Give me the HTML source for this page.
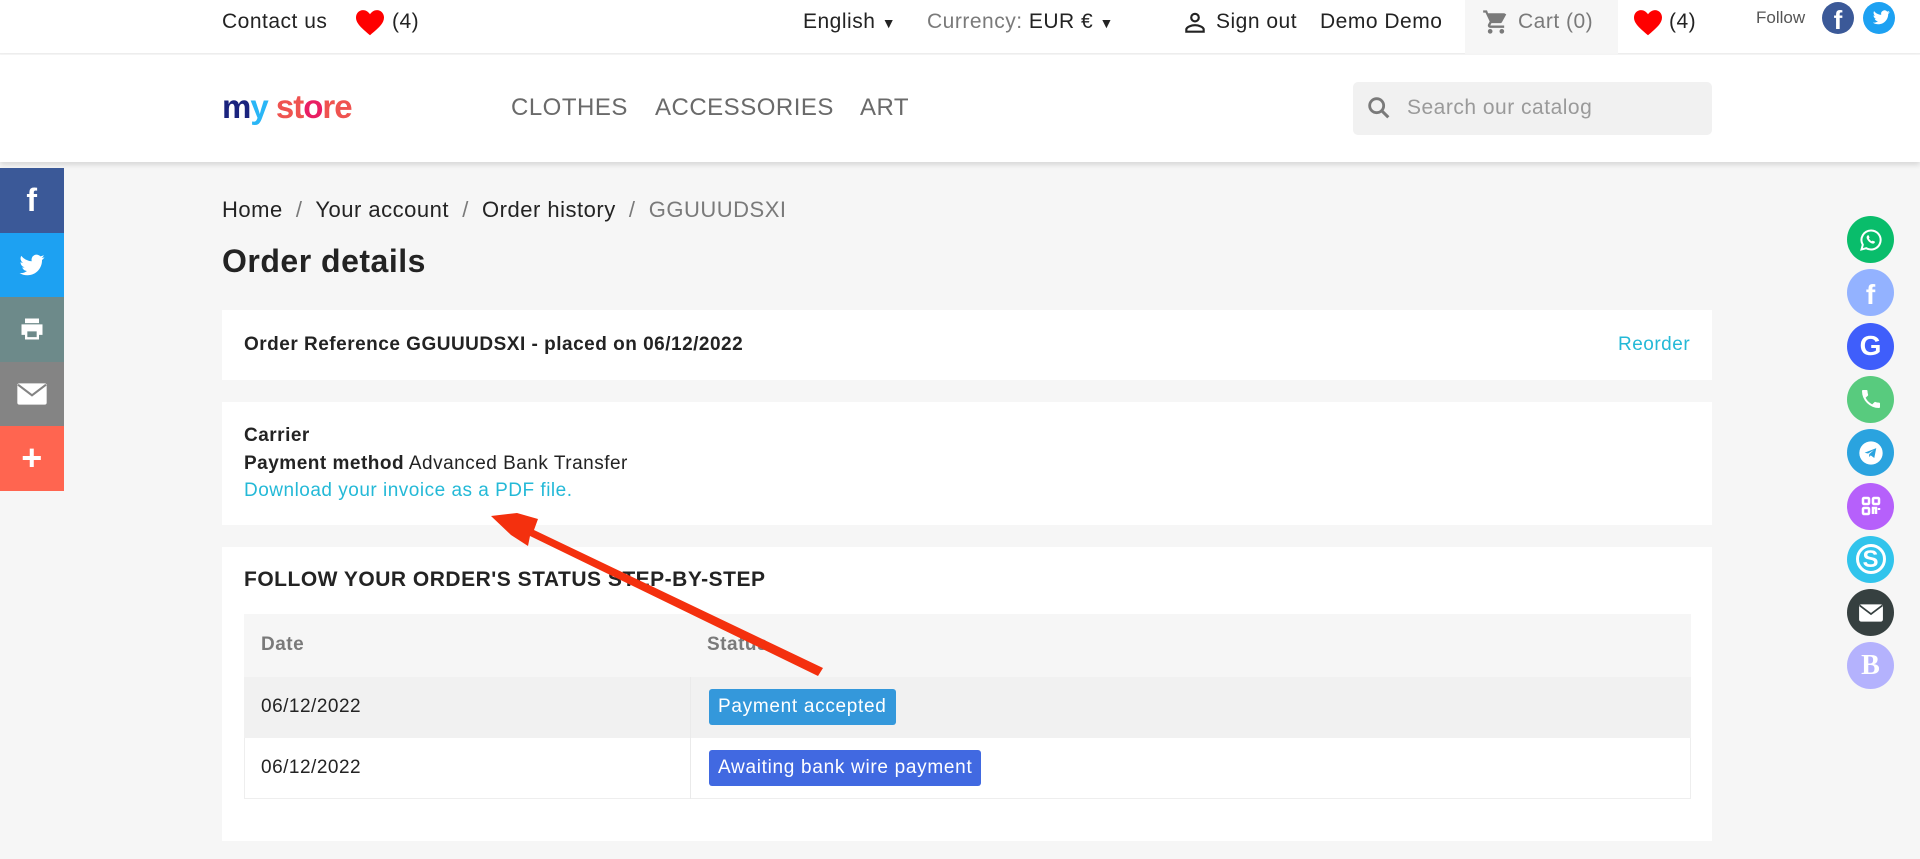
<!DOCTYPE html>
<html><head><meta charset="utf-8"><style>
*{box-sizing:border-box;margin:0;padding:0}
body{width:1920px;height:859px;overflow:hidden;background:#f6f6f6;font-family:"Liberation Sans",sans-serif;color:#232323;position:relative;letter-spacing:0.5px}
.a{position:absolute;white-space:nowrap}
.top{position:absolute;left:0;top:0;width:1920px;height:54px;background:#fff;border-bottom:1px solid #eee}
.hdr{position:absolute;left:0;top:55px;width:1920px;height:107px;background:#fff;box-shadow:0 3px 5px rgba(0,0,0,.12)}
.t{font-size:21px;top:10px}
.nav{font-size:24px;color:#6a6a6a;top:94px}
.box{position:absolute;left:222px;width:1490px;background:#fff}
.ls{position:absolute;left:0;width:64px;height:64.5px;display:flex;align-items:center;justify-content:center}
.rc{position:absolute;left:1847px;width:47px;height:47px;border-radius:50%;display:flex;align-items:center;justify-content:center;letter-spacing:0}
.badge{position:absolute;color:#fff;font-size:19px;border-radius:3px;padding:0 9px;line-height:36px;height:36px;letter-spacing:0.7px}
</style></head><body>
<div class="top"></div>
<div class="a t" style="left:222px">Contact us</div>
<svg class="a" style="left:356px;top:10px" width="28" height="26" viewBox="0 0 24 22"><path d="M12 21.5C5 15.5 0 11.5 0 6.3 0 2.8 2.6 0 6 0c2.4 0 4.6 1.5 6 3.5C13.4 1.5 15.6 0 18 0c3.4 0 6 2.8 6 6.3 0 5.2-5 9.2-12 15.2z" fill="#f00"/></svg>
<div class="a t" style="left:392px">(4)</div>
<div class="a t" style="left:803px">English <span style="font-size:14px">▼</span></div>
<div class="a t" style="left:927px;color:#7a7a7a">Currency: <span style="color:#232323">EUR € <span style="font-size:14px">▼</span></span></div>
<svg class="a" style="left:1182px;top:10px" width="26" height="26" viewBox="0 0 24 24"><circle cx="12" cy="7" r="3.5" fill="none" stroke="#232323" stroke-width="2"/><path d="M4 20v-2c0-2.5 5-4 8-4s8 1.5 8 4v2z" fill="none" stroke="#232323" stroke-width="2"/></svg>
<div class="a t" style="left:1216px">Sign out</div>
<div class="a t" style="left:1320px">Demo Demo</div>
<div class="a" style="left:1465px;top:0;width:153px;height:54px;background:#f6f6f6"></div>
<svg class="a" style="left:1482px;top:8px" width="28" height="28" viewBox="0 0 24 24"><path d="M7 18a2 2 0 100 4 2 2 0 000-4zM1 2v2h2l3.6 7.6-1.4 2.4c-.1.3-.2.6-.2 1 0 1.1.9 2 2 2h12v-2H7.4c-.1 0-.2-.1-.2-.2v-.1l.9-1.7h7.4c.8 0 1.4-.4 1.700-1l3.6-6.5-1.7-1H5.2L4.3 2zM17 18a2 2 0 100 4 2 2 0 000-4z" fill="#7a7a7a"/></svg>
<div class="a t" style="left:1518px;color:#7a7a7a">Cart (0)</div>
<svg class="a" style="left:1634px;top:10px" width="28" height="26" viewBox="0 0 24 22"><path d="M12 21.5C5 15.5 0 11.5 0 6.3 0 2.8 2.6 0 6 0c2.4 0 4.6 1.5 6 3.5C13.4 1.5 15.6 0 18 0c3.4 0 6 2.8 6 6.3 0 5.2-5 9.2-12 15.2z" fill="#f00"/></svg>
<div class="a t" style="left:1669px">(4)</div>
<div class="a" style="left:1756px;top:8px;font-size:17px;color:#555;letter-spacing:0">Follow</div>
<div class="a" style="left:1822px;top:2px;width:32px;height:32px;border-radius:50%;background:#3b5998;color:#fff;font-weight:bold;font-size:26px;text-align:center;line-height:36px;letter-spacing:0">f</div>
<div class="a" style="left:1863px;top:2px;width:32px;height:32px;border-radius:50%;background:#1da1f2"><svg width="32" height="32" viewBox="0 0 24 24"><path d="M18.5 8.2c.6-.4 1-.9 1.3-1.5-.5.3-1.1.4-1.6.5a2.6 2.6 0 00-4.5 2.4c-2.2-.1-4.1-1.2-5.4-2.8-.7 1.2-.3 2.7.8 3.5-.4 0-.8-.1-1.200-.3 0 1.3.9 2.4 2.1 2.6-.4.1-.8.1-1.2 0 .3 1 1.3 1.8 2.4 1.8-1 .8-2.4 1.2-3.8 1.1 1.2.8 2.6 1.2 4 1.2 4.9 0 7.6-4.1 7.5-7.8.5-.3.9-.8 1.3-1.3-.5.2-1 .3-1.5.4z" fill="#fff"/></svg></div>

<div class="hdr"></div>
<div class="a" style="left:222px;top:88px;font-size:33px;font-weight:bold;letter-spacing:-1px"><span style="color:#1a237e">m</span><span style="color:#29b6f6">y</span> <span style="color:#ef5350">st</span><span style="color:#e91e63">o</span><span style="color:#ef5350">re</span></div>
<div class="a nav" style="left:511px">CLOTHES</div>
<div class="a nav" style="left:655px">ACCESSORIES</div>
<div class="a nav" style="left:860px">ART</div>
<div class="a" style="left:1353px;top:82px;width:359px;height:53px;background:#f1f1f1;border-radius:5px"></div>
<svg class="a" style="left:1365px;top:94px" width="28" height="28" viewBox="0 0 24 24"><circle cx="10" cy="10" r="6" fill="none" stroke="#7a7a7a" stroke-width="2.4"/><path d="M14.5 14.5l5.5 5.5" stroke="#7a7a7a" stroke-width="2.6"/></svg>
<div class="a" style="left:1407px;top:96px;font-size:21px;color:#9a9a9a">Search our catalog</div>

<div class="ls" style="top:168px;background:#3b5998;color:#fff;font-weight:bold;font-size:32px">f</div>
<div class="ls" style="top:232.5px;background:#1da1f2"><svg width="30" height="30" viewBox="0 0 24 24"><path d="M22 5.8c-.7.3-1.5.5-2.4.6.9-.5 1.5-1.3 1.8-2.3-.8.5-1.7.8-2.6 1A4.1 4.1 0 0011.8 9 11.6 11.6 0 013.4 4.7a4.1 4.1 0 001.3 5.5c-.7 0-1.3-.2-1.9-.5 0 2 1.4 3.7 3.3 4.1-.6.2-1.2.2-1.9.1.5 1.6 2.1 2.8 3.8 2.9A8.2 8.2 0 012 18.4 11.6 11.6 0 008.3 20.2c7.5 0 11.7-6.3 11.7-11.7v-.5c.8-.6 1.5-1.3 2-2.2z" fill="#fff"/></svg></div>
<div class="ls" style="top:297px;background:#6d8a8a"><svg width="28" height="28" viewBox="0 0 24 24"><path d="M6 3h12v4H6zM3 8h18v9h-3v4H6v-4H3zm5 6v5h8v-5z" fill="#fff"/></svg></div>
<div class="ls" style="top:361.5px;background:#848484"><svg width="32" height="26" viewBox="0 0 24 18"><rect x="1" y="1" width="22" height="16" rx="1.5" fill="#fff"/><path d="M1.5 2l10.5 8 10.5-8" fill="none" stroke="#848484" stroke-width="1.6"/></svg></div>
<div class="ls" style="top:426px;background:#ff6550;color:#fff;font-size:36px;font-weight:bold">+</div>

<div class="a" style="left:222px;top:197px;font-size:22px">Home <span style="color:#7a7a7a">&nbsp;/&nbsp;</span> Your account <span style="color:#7a7a7a">&nbsp;/&nbsp;</span> Order history <span style="color:#7a7a7a">&nbsp;/&nbsp; GGUUUDSXI</span></div>
<div class="a" style="left:222px;top:243px;font-size:32px;font-weight:bold">Order details</div>

<div class="box" style="top:310px;height:70px"></div>
<div class="a" style="left:244px;top:334px;font-size:19px;font-weight:bold">Order Reference GGUUUDSXI - placed on 06/12/2022</div>
<div class="a" style="left:1618px;top:334px;font-size:19px;color:#24b9d7">Reorder</div>

<div class="box" style="top:402px;height:123px"></div>
<div class="a" style="left:244px;top:425px;font-size:19px;font-weight:bold">Carrier</div>
<div class="a" style="left:244px;top:453px;font-size:19px"><b>Payment method</b> Advanced Bank Transfer</div>
<div class="a" style="left:244px;top:480px;font-size:19px;color:#24b9d7">Download your invoice as a PDF file.</div>

<div class="box" style="top:547px;height:294px"></div>
<div class="a" style="left:244px;top:568px;font-size:21px;font-weight:bold">FOLLOW YOUR ORDER'S STATUS STEP-BY-STEP</div>
<div class="a" style="left:244px;top:614px;width:1447px;height:63px;background:#f6f6f6"></div>
<div class="a" style="left:244px;top:677px;width:1447px;height:61px;background:#f1f1f1"></div>
<div class="a" style="left:244px;top:738px;width:1447px;height:61px;background:#fff;border:1px solid #eee;border-top:0"></div>
<div class="a" style="left:690px;top:677px;width:1px;height:122px;background:#eaeaea"></div>
<div class="a" style="left:261px;top:634px;font-size:19px;font-weight:bold;color:#7a7a7a">Date</div>
<div class="a" style="left:707px;top:634px;font-size:19px;font-weight:bold;color:#7a7a7a">Status</div>
<div class="a" style="left:261px;top:696px;font-size:19px">06/12/2022</div>
<div class="a" style="left:261px;top:757px;font-size:19px">06/12/2022</div>
<div class="badge" style="left:709px;top:689px;background:#3498db">Payment accepted</div>
<div class="badge" style="left:709px;top:750px;background:#4169e1">Awaiting bank wire payment</div>

<svg class="a" style="left:0;top:0" width="1920" height="859"><path d="M823 668L534 530 538 519 517 513 491 516 511 535 528 546 530 536 818 676z" fill="#f4300e"/></svg>

<div class="rc" style="top:216px;background:#09bd6b"><svg width="24" height="24" viewBox="0 0 24 24"><path d="M12 2.5a9.5 9.5 0 00-8.2 14.3L2.5 21.5l4.8-1.3A9.5 9.5 0 1012 2.5z" fill="none" stroke="#fff" stroke-width="2"/><path d="M8.5 7.5c.5-.5 1-.4 1.3.2l.7 1.6c.1.4-.3.8-.6 1.1.6 1.3 1.6 2.3 2.9 2.9.3-.3.7-.8 1.1-.6l1.6.7c.5.3.6.8.2 1.3-.8 1-2 1.2-3.3.6a9 9 0 01-4.5-4.5c-.5-1.3-.3-2.5.6-3.3z" fill="#fff"/></svg></div>
<div class="rc" style="top:269.3px;background:#93b2ff;color:#fff;font-weight:bold;font-size:28px;padding-top:4px">f</div>
<div class="rc" style="top:322.6px;background:#3f5efb;color:#fff;font-weight:bold;font-size:28px">G</div>
<div class="rc" style="top:375.9px;background:#58cb7e"><svg width="24" height="24" viewBox="0 0 24 24"><path d="M6.6 10.8a15.1 15.1 0 006.6 6.6l2.2-2.2c.3-.3.7-.4 1-.2 1.1.4 2.3.6 3.6.6.6 0 1 .4 1 1V20c0 .6-.4 1-1 1A17 17 0 013 4c0-.6.4-1 1-1h3.5c.6 0 1 .4 1 1 0 1.3.2 2.5.6 3.6.1.3 0 .7-.2 1z" fill="#fff"/></svg></div>
<div class="rc" style="top:429.2px;background:#2aa3df"><svg width="28" height="28" viewBox="0 0 24 24"><circle cx="12" cy="12" r="10" fill="#fff"/><path d="M6.5 11.8l10-4-1.7 8.5-3-2.3-1.5 1.4.2-2.4 4-3.6-5 3z" fill="#2aa3df"/></svg></div>
<div class="rc" style="top:482.5px;background:#b660fb"><svg width="24" height="24" viewBox="0 0 24 24" fill="none" stroke="#fff" stroke-width="2.5"><rect x="4" y="4" width="6" height="6" rx="1"/><rect x="14" y="4" width="6" height="6" rx="1"/><rect x="4" y="14" width="6" height="6" rx="1"/><path d="M14 20v-6h3v6M20 14v2"/></svg></div>
<div class="rc" style="top:535.8px;background:#31c4ec;color:#fff;font-weight:bold;font-size:24px"><span style="border:3px solid #fff;border-radius:50%;width:30px;height:30px;line-height:25px;text-align:center;display:block">S</span></div>
<div class="rc" style="top:589.1px;background:#364040"><svg width="26" height="22" viewBox="0 0 24 18"><rect x="1" y="1" width="22" height="16" rx="2" fill="#fff"/><path d="M1.5 2l10.5 8 10.5-8" fill="none" stroke="#364040" stroke-width="1.6"/></svg></div>
<div class="rc" style="top:642.4px;background:#b4b2fd;color:#fff;font-weight:bold;font-size:28px;font-family:'Liberation Serif',serif">B</div>
</body></html>
